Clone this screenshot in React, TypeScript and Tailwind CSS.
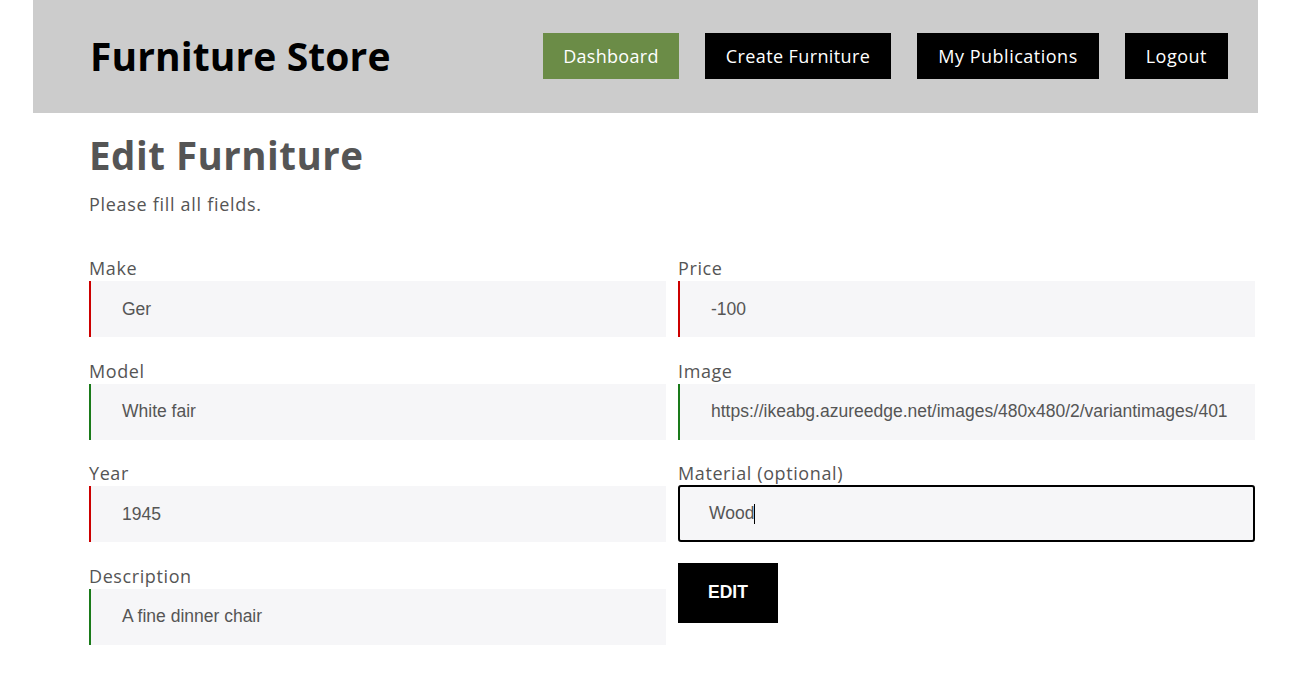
import React from "react";

const sans = { fontFamily: '"Open Sans", "Noto Sans", sans-serif' };

function Field({ label, value, border, focused }: { label: string; value: string; border: string; focused?: boolean }) {
  return (
    <div className="flex flex-col">
      <label className="text-[18px] leading-[26px] tracking-[0.6px] text-[#555]" style={sans}>{label}</label>
      {focused ? (
        <div className="mt-[-1px] h-[57px] bg-[#f6f6f8] border-2 border-black rounded-[3px] flex items-center pl-[29px] text-[17.5px] text-[#555] font-['Liberation_Sans',Arial,sans-serif]">
          <span>{value}</span>
          <span className="inline-block w-[1px] h-[20px] bg-black"></span>
        </div>
      ) : (
        <div className={`h-[56px] bg-[#f6f6f8] border-l-2 ${border} flex items-center pl-[31px] text-[17.5px] text-[#555] font-['Liberation_Sans',Arial,sans-serif] whitespace-nowrap overflow-hidden`}>
          {value}
        </div>
      )}
    </div>
  );
}

export default function App() {
  return (
    <div className="min-h-[674px] bg-white">
      <div className="ml-[33px] w-[1225px]">
        <header className="h-[113px] bg-[#cccccc] flex items-center justify-between pl-[57px] pr-[30px]">
          <h1 className="text-[39px] font-bold text-black tracking-[0.1px]" style={sans}>Furniture Store</h1>
          <nav className="flex gap-[26px] -mt-[1px]" style={sans}>
            <a className="h-[46px] px-[20px] flex items-center bg-[#6b8c47] text-white text-[18px] tracking-[0.3px]">Dashboard</a>
            <a className="h-[46px] px-[21px] flex items-center bg-black text-white text-[18px] tracking-[0.4px]">Create Furniture</a>
            <a className="h-[46px] px-[21px] flex items-center bg-black text-white text-[18px] tracking-[0.5px]">My Publications</a>
            <a className="h-[46px] px-[21px] flex items-center bg-black text-white text-[18px] tracking-[0.5px]">Logout</a>
          </nav>
        </header>
        <main className="pl-[56px] pr-[3px]">
          <h2 className="mt-[18px] text-[38.5px] leading-[48px] font-bold text-[#555] tracking-[0.5px]" style={sans}>Edit Furniture</h2>
          <p className="mt-[13px] text-[18px] leading-[24px] text-[#555] tracking-[0.7px]" style={sans}>Please fill all fields.</p>
          <div className="mt-[39px] grid grid-cols-2 gap-x-[12px]">
            <div className="flex flex-col gap-[20.5px]">
              <Field label="Make" value="Ger" border="border-[#cc0000]" />
              <Field label="Model" value="White fair" border="border-[#1a7a1a]" />
              <Field label="Year" value="1945" border="border-[#cc0000]" />
              <Field label="Description" value="A fine dinner chair" border="border-[#1a7a1a]" />
            </div>
            <div className="flex flex-col gap-[20.5px]">
              <Field label="Price" value="-100" border="border-[#cc0000]" />
              <Field label="Image" value="https://ikeabg.azureedge.net/images/480x480/2/variantimages/401" border="border-[#1a7a1a]" />
              <Field label="Material (optional)" value="Wood" border="" focused />
              <div>
                <button className="w-[100px] h-[60px] bg-black text-white font-bold text-[17.5px] font-['Liberation_Sans',Arial,sans-serif]">EDIT</button>
              </div>
            </div>
          </div>
        </main>
      </div>
    </div>
  );
}
